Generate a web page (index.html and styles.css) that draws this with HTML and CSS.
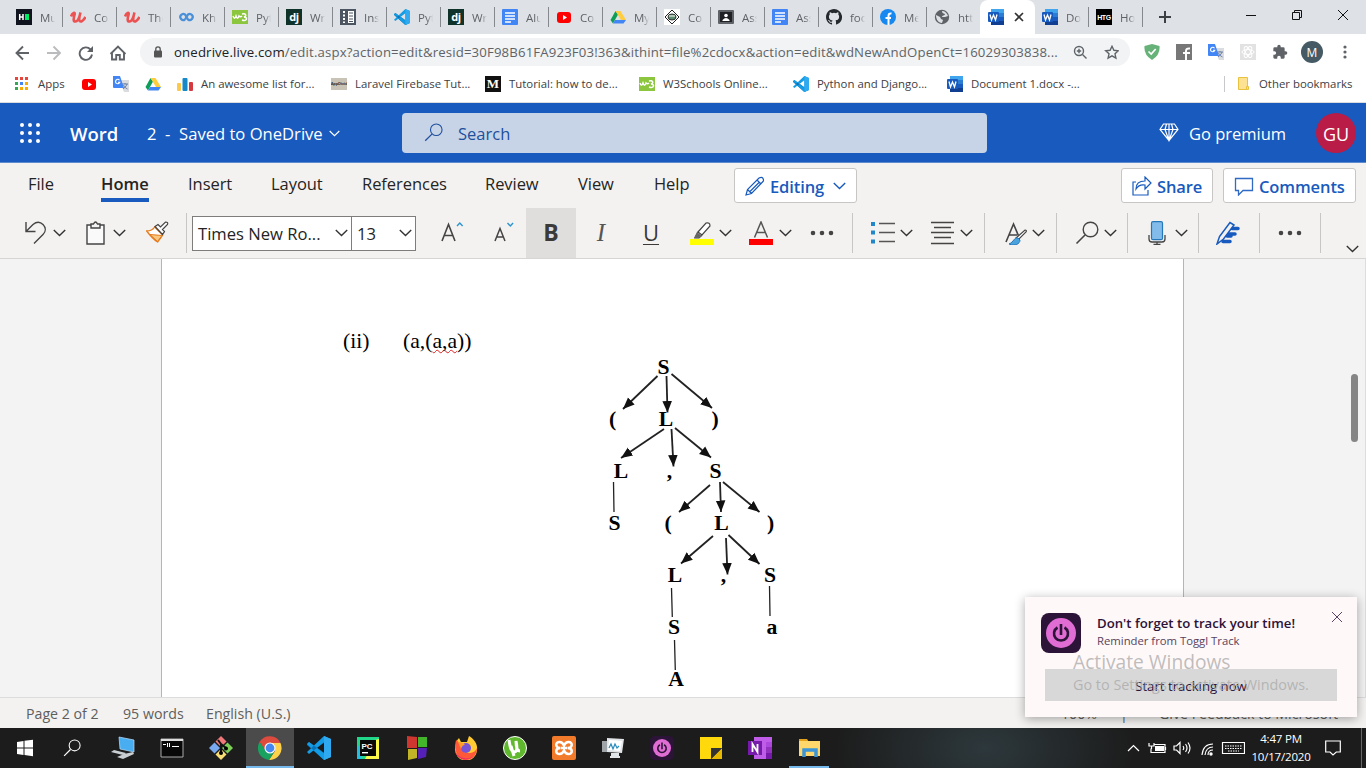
FILE: index.html
```html
<!DOCTYPE html>
<html lang="en">
<head>
<meta charset="utf-8">
<title>2 - Saved to OneDrive</title>
<link rel="stylesheet" href="styles.css">
</head>
<body>
<svg class="sprite" aria-hidden="true">
  <symbol id="chev" viewBox="0 0 13 8"><path d="M.8 1l5.7 5.6L12.200 1" fill="none" stroke="currentColor" stroke-width="1.4"/></symbol>
  <symbol id="udemy" viewBox="0 0 16 16"><path d="M1 7.500c1.500-4 4.500-5 3.500-1.500S3 12.500 5.500 12.500 9.500 8 10.500 3.500c-1.500 5-2 9 0 9s3.500-2 5-4.500" fill="none" stroke="#ec5252" stroke-width="2.600"/></symbol>
  <symbol id="w3" viewBox="0 0 16 16"><path fill="#8bc63e" d="M0 1h16v14H0z"/><path d="M1 7c1 3 2 3 3 0 1 3 2 3 3 0 1 1 2 1 3 0M10 5c4-1 5 2 2 3 4 0 3 5-2 3" fill="none" stroke="#fff" stroke-width="1.500"/></symbol>
  <symbol id="vs" viewBox="0 0 24 24"><path fill="#0873b8" d="M0 8l2-2L23 21l-6 3L0 9z"/><path fill="#149ce5" d="M0 16l2 2L17 6.500v11L10 12 2 6 0 8l17 16 7-3V3l-7-3z" fill-rule="evenodd"/><path fill="#2faaf0" d="M17 0l7 3v18l-7 3z"/></symbol>
  <symbol id="docs" viewBox="0 0 16 16"><rect width="16" height="16" rx="1" fill="#4285f4"/><path d="M3 4h10M3 7h10M3 10h10M3 13h6" stroke="#fff" stroke-width="1.500"/></symbol>
  <symbol id="yt" viewBox="0 0 16 16"><rect x="1" y="3" width="14" height="11" rx="3" fill="#f00"/><path fill="#fff" d="M7 6l4 2.500L7 11z"/></symbol>
  <symbol id="drive" viewBox="0 0 16 16"><path fill="#0f9d58" d="M5.500 2L.5 11 3 14.500 8 5.500z"/><path fill="#ffcd40" d="M5.500 2h5L16 11h-5z"/><path fill="#4285f4" d="M5 11h11l-2.500 3.500H3z"/></symbol>
  <symbol id="word" viewBox="0 0 16 16"><path fill="#41a5ee" d="M3 0h13v4H3z"/><path fill="#2b7cd3" d="M3 4h13v4H3z"/><path fill="#185abd" d="M3 8h13v4H3z"/><path fill="#103f91" d="M3 12h13v4H3z"/><rect y="3" width="11" height="10" rx="1" fill="#185abd"/><path d="M2 5.500l1.500 5.500 2-5 2 5L9 5.500" fill="none" stroke="#fff" stroke-width="1.300"/></symbol>
  <symbol id="trans" viewBox="0 0 16 16"><path fill="#dadce0" d="M6 4h10v12h-5z"/><path d="M9 8h6M12 7v1M14 8c-1 3-3 4-4 5M10.500 9c1 2 2 3 4 4" stroke="#6b7fa5" fill="none"/><path fill="#4285f4" d="M0 0h7l4 12H1q-1 0-1-1z"/><path d="M6.500 4.200a2.200 2.200 0 1 0 .3 2H5" stroke="#fff" fill="none" stroke-width="1.100"/></symbol>
  <symbol id="toggl" viewBox="0 0 40 40"><rect width="40" height="40" rx="8" fill="#2c1338"/><circle cx="20" cy="20" r="15" fill="#e06dd4"/><path d="M16.500 14.500a7 7 0 1 0 7 0M20 11v11" fill="none" stroke="#2c1338" stroke-width="2.600"/></symbol>
  <symbol id="magnify" viewBox="0 0 24 24"><circle cx="15.500" cy="8.500" r="7.300" fill="none" stroke="currentColor" stroke-width="1.400"/><path d="M10 14L1.500 22.500" stroke="currentColor" stroke-width="1.600"/></symbol>
  <symbol id="dots" viewBox="0 0 24 6"><path fill="currentColor" d="M.7 3a2.300 2.300 0 1 0 4.600 0 2.300 2.300 0 1 0-4.600 0M9.700 3a2.300 2.300 0 1 0 4.600 0 2.300 2.300 0 1 0-4.600 0M18.700 3a2.300 2.300 0 1 0 4.600 0 2.300 2.300 0 1 0-4.600 0"/></symbol>
</svg>

<div class="tabs">
  <div class="tab"><svg class="i16" viewBox="0 0 16 16"><path fill="#10141f" d="M0 0h16v16H0z"/><path stroke="#fff" stroke-width="1.500" d="M3.700 5v6M7 5v6M3 8h4"/><path fill="#00ea64" d="M9 5h4v6H9z"/></svg><span>Mu</span></div>
  <div class="tab"><svg class="i16"><use href="#udemy"/></svg><span>Co</span></div>
  <div class="tab"><svg class="i16"><use href="#udemy"/></svg><span>The</span></div>
  <div class="tab"><svg class="i16" viewBox="0 0 16 16"><path d="M7 10.500a3 3 0 1 1 0-5l3 5a3 3 0 1 0 0-5L7 10.500" fill="none" stroke="#4a90d9" stroke-width="2.300"/></svg><span>Kh</span></div>
  <div class="tab"><svg class="i16"><use href="#w3"/></svg><span>Pyt</span></div>
  <div class="tab"><b class="fav dj">dj</b><span>Wri</span></div>
  <div class="tab"><svg class="i16" viewBox="0 0 16 16"><path fill="#4c5562" d="M0 0h16v16H0z"/><path fill="#fff" d="M8 2h6v12H8z"/><path stroke="#fff" stroke-width="2" stroke-dasharray="2 1.500" d="M4 2v12"/><path stroke="#4c5562" d="M9 4h4M9 7h4M9 10h4M9 12.500h4"/></svg><span>Inst</span></div>
  <div class="tab"><svg class="i16"><use href="#vs"/></svg><span>Pyt</span></div>
  <div class="tab"><b class="fav dj">dj</b><span>Wri</span></div>
  <div class="tab"><svg class="i16"><use href="#docs"/></svg><span>Alu</span></div>
  <div class="tab"><svg class="i16"><use href="#yt"/></svg><span>Co</span></div>
  <div class="tab"><svg class="i16"><use href="#drive"/></svg><span>My</span></div>
  <div class="tab"><svg class="i16" viewBox="0 0 16 16"><path fill="#fff" d="M0 0h16v16H0z"/><path fill="none" stroke="#222" d="M8 1l7 7-7 7-7-7z"/><ellipse cx="8" cy="8" rx="4" ry="3" fill="#5c8d6d" stroke="#333"/><path stroke="#fff" d="M5 7h6"/></svg><span>Co</span></div>
  <div class="tab"><svg class="i16" viewBox="0 0 16 16"><rect y="1" width="16" height="14" rx="1" fill="#5f6368"/><path fill="#202124" d="M2 3h12v10H2z"/><circle cx="8" cy="6.500" r="1.800" fill="#fff"/><path fill="#fff" d="M4.500 11q3.500-4 7 0v1h-7z"/></svg><span>Ass</span></div>
  <div class="tab"><svg class="i16"><use href="#docs"/></svg><span>Ass</span></div>
  <div class="tab"><svg class="i16" viewBox="0 0 16 16"><path fill="#24292e" d="M8 0C3.580 0 0 3.580 0 8c0 3.540 2.290 6.530 5.470 7.590.4.070.55-.17.55-.38v-1.490c-2.010.37-2.530-.49-2.690-.94-.09-.23-.48-.94-.82-1.130-.28-.15-.68-.52-.01-.53.63-.01 1.080.58 1.230.82.72 1.210 1.870.87 2.330.66.070-.52.280-.87.510-1.070-1.780-.2-3.640-.89-3.640-3.950 0-.87.310-1.590.820-2.150-.08-.2-.36-1.020.080-2.120 0 0 .67-.21 2.200.82a7.600 7.600 0 0 1 4 0c1.530-1.040 2.200-.82 2.200-.82.440 1.100.160 1.920.080 2.120.510.560.820 1.270.820 2.150 0 3.070-1.870 3.750-3.650 3.950.290.250.540.730.540 1.480v2.200c0 .210.150.460.550.380A8 8 0 0 0 8 0z"/></svg><span>foo</span></div>
  <div class="tab"><svg class="i16" viewBox="0 0 16 16"><circle cx="8" cy="8" r="8" fill="#1688f0"/><path d="M8.500 16V7q0-3 3-2.500M5.500 9h5.500" fill="none" stroke="#fff" stroke-width="2"/></svg><span>Me</span></div>
  <div class="tab nosep"><svg class="i16" viewBox="0 0 16 16"><circle cx="8" cy="8" r="7.200" fill="#5f6368"/><path fill="#dee1e6" d="M2 6l4 2 1 2 2 1-1 3c-4 0-6-4-6-8zM8 2c0 2 1 2 3 3 0 2-3 1-3 3 2 0 4 0 6-1-1-3-3-5-6-5z"/></svg><span>http</span></div>
  <div class="tab active"><svg class="i16"><use href="#word"/></svg><svg class="close" viewBox="0 0 10 10"><path d="M1 1l8 8M9 1L1 9" stroke="#333" stroke-width="1.700"/></svg></div>
  <div class="tab"><svg class="i16"><use href="#word"/></svg><span>Do</span></div>
  <div class="tab"><b class="fav htg">HTG</b><span>Ho</span></div>
  <svg class="newtab" viewBox="0 0 12 12"><path d="M6 0v12M0 6h12" stroke="#3c4043" stroke-width="2"/></svg>
  <svg class="wincontrols" viewBox="0 0 104 12"><g fill="none" stroke="#111"><path d="M0 6.500h10M46.500 3.500h7v7h-7zM48.500 3V1.500h7v7H54M92 1l10 10M102 1L92 11"/></g></svg>
</div>

<div class="addressbar">
  <svg class="nav" viewBox="0 0 112 16"><g fill="none" stroke="#5f6368" stroke-width="1.900"><path d="M15 8H3M9 1.500L2.500 8 9 14.500"/><path stroke="#babcbe" d="M33 8h13M39.500 1.500L46 8l-6.500 6.500"/><path d="M76.500 4.500A6.200 6.200 0 1 0 78 9.500"/><path d="M98 8v6.500h4.200v-4.500h3.600v4.500h4.200V8M96.500 9L104 1.500l7.500 7.500"/></g><path fill="#5f6368" d="M79 1v6h-6z"/></svg>
  <div class="omnibox">
    <svg class="lock" viewBox="0 0 8 12"><path d="M1.800 5V3a2.200 2.200 0 0 1 4.400 0v2" fill="none" stroke="#555" stroke-width="1.300"/><rect y="4.500" width="8" height="7" rx="1" fill="#555"/></svg>
    <span class="url"><b>onedrive.live.com</b>/edit.aspx?action=edit&amp;resid=30F98B61FA923F03!363&amp;ithint=file%2cdocx&amp;action=edit&amp;wdNewAndOpenCt=16029303838...</span>
    <svg class="omni" viewBox="0 0 46 15"><g fill="none" stroke="#5f6368" stroke-width="1.400"><circle cx="6" cy="6" r="4.500"/><path d="M9.500 9.500L13.500 13.500M6 3.800v4.400M3.800 6h4.400M39 1.300l1.900 4 4.400.5-3.300 3 .9 4.300-3.900-2.200-3.900 2.200.9-4.300-3.300-3 4.400-.5z"/></g></svg>
  </div>
  <div class="exts">
    <svg class="i16" viewBox="0 0 16 16"><path fill="#67b279" d="M8 0l7.500 2q1 9-7.500 14Q-.5 11 .5 2z"/><path d="M4.500 7.500L7.200 10l4.500-5" fill="none" stroke="#fff" stroke-width="1.700"/></svg>
    <svg class="i16" viewBox="0 0 16 16"><path fill="#777" d="M0 0h16v16H0z"/><path d="M10 16V7q0-3 4-2.500M7 9h7" stroke="#fff" stroke-width="2" fill="none"/></svg>
    <svg class="i16"><use href="#trans"/></svg>
    <svg class="i16" viewBox="0 0 16 16"><path fill="#e2e2e2" d="M0 0h16v16H0z"/><g fill="none" stroke="#fff"><ellipse cx="8" cy="8" rx="6" ry="2.500"/><ellipse cx="8" cy="8" rx="6" ry="2.500" transform="rotate(60 8 8)"/><ellipse cx="8" cy="8" rx="6" ry="2.500" transform="rotate(120 8 8)"/></g></svg>
    <svg class="i16" viewBox="0 0 24 24"><path fill="#5f6368" d="M20.500 11H19V7a2 2 0 0 0-2-2h-4V3.500a2.500 2.500 0 0 0-5 0V5H4a2 2 0 0 0-2 2v3.800h1.500a2.700 2.700 0 0 1 0 5.400H2V20a2 2 0 0 0 2 2h3.800v-1.500a2.700 2.700 0 0 1 5.400 0V22H17a2 2 0 0 0 2-2v-4h1.500a2.500 2.500 0 0 0 0-5z"/></svg>
    <span class="profile">M</span>
    <svg class="kebab" viewBox="0 0 4 14"><circle cx="2" cy="2" r="1.600"/><circle cx="2" cy="7" r="1.600"/><circle cx="2" cy="12" r="1.600"/></svg>
  </div>
</div>

<div class="bookmarks">
  <div class="bm apps"><svg class="i16" viewBox="0 0 16 16"><path fill="#e8453c" d="M2 1h3v3H2zM7 1h3v3H7zM12 1h3v3h-3z"/><path fill="#34a853" d="M2 6h3v3H2zM2 11h3v3H2z"/><path fill="#4285f4" d="M7 6h3v3H7z"/><path fill="#f9ab00" d="M12 6h3v3h-3zM7 11h3v3H7zM12 11h3v3h-3z"/></svg>Apps</div>
  <div class="bm only"><svg class="i16"><use href="#yt"/></svg></div>
  <div class="bm only"><svg class="i16"><use href="#trans"/></svg></div>
  <div class="bm only"><svg class="i16"><use href="#drive"/></svg></div>
  <div class="bm"><svg class="i16" viewBox="0 0 16 16"><rect y="7" width="4" height="8" rx="1" fill="#fbc94b"/><rect x="5.500" y="2" width="5" height="13" rx="1" fill="#1689c9"/><rect x="12" y="6" width="4" height="9" rx="1" fill="#d5383f"/></svg>An awesome list for...</div>
  <div class="bm"><b class="fav appdiv">AppDivid</b>Laravel Firebase Tut...</div>
  <div class="bm"><b class="fav medium">M</b>Tutorial: how to de...</div>
  <div class="bm"><svg class="i16"><use href="#w3"/></svg>W3Schools Online...</div>
  <div class="bm"><svg class="i16"><use href="#vs"/></svg>Python and Django...</div>
  <div class="bm"><svg class="i16"><use href="#word"/></svg>Document 1.docx -...</div>
  <div class="bm other"><svg class="i16" viewBox="0 0 16 16"><path fill="#fde293" stroke="#e9c13c" d="M1.500 1.500h9v9l-1 3h-8z"/><path fill="#fde293" stroke="#e9c13c" d="M9.500 13.500v-3h2v3z"/></svg>Other bookmarks</div>
</div>

<header class="header">
  <svg class="waffle" viewBox="0 0 20 20" fill="#fff"><g id="wr"><circle cx="2" cy="2" r="2"/><circle cx="10" cy="2" r="2"/><circle cx="18" cy="2" r="2"/></g><use href="#wr" y="8"/><use href="#wr" y="16"/></svg>
  <b class="appname">Word</b>
  <span class="docname">2&nbsp; -&nbsp; Saved to OneDrive</span><svg class="hchev"><use href="#chev"/></svg>
  <div class="search"><svg class="sicon"><use href="#magnify"/></svg><span>Search</span></div>
  <svg class="gem" viewBox="0 0 20 19"><path d="M4.500 1h11L19 6.500 10 17.500 1 6.500zM1 6.500h18M7.500 1L6 6.500l4 11 4-11L12.500 1M10 1v16" fill="none" stroke="#fff" stroke-width="1.200"/></svg>
  <span class="premium">Go premium</span>
  <span class="avatar">GU</span>
</header>

<div class="ribbon">
  <nav class="menu">
    <span>File</span><span class="on">Home</span><span>Insert</span><span>Layout</span><span>References</span><span>Review</span><span>View</span><span>Help</span>
    <div class="btn editing"><svg class="bi" viewBox="0 0 20 20"><path d="M1 19l1.500-5.500L14 2q3-1.500 4 .5t0 3L6.500 17.500zM2.500 13.500l4 4M12 4l4 4M5 15.500L14.500 6" fill="none" stroke="#185abd" stroke-width="1.200"/></svg><span>Editing</span><svg class="ch"><use href="#chev"/></svg></div>
    <div class="btn share"><svg class="bi" viewBox="0 0 20 20"><path d="M4 6H1v13h15v-5M4 13q0-8 9-8V1l6 6-6 6V9q-6-1-9 4z" fill="none" stroke="#185abd" stroke-width="1.200"/></svg><span>Share</span></div>
    <div class="btn comments"><svg class="bi" viewBox="0 0 20 20"><path d="M1.500 2.500h17v12H9L4.500 19v-4.500h-3z" fill="none" stroke="#2f6ac4" stroke-width="1.300"/></svg><span>Comments</span></div>
  </nav>
  <div class="tools">
    <svg class="t24" viewBox="0 0 24 24"><path d="M1 1v9.500h9.500M1 10.500L8 3.500c3-2.500 7-3 10 0s3 7 0 10l-9 9" fill="none" stroke="#444" stroke-width="1.400"/></svg>
    <svg class="ch"><use href="#chev"/></svg>
    <svg class="t24" viewBox="0 0 24 24"><path d="M1 4h17v19H1z" fill="#fafafa" stroke="#444" stroke-width="1.400"/><path d="M5 7V3h2.500q2-4 4 0H14v4z" fill="#f3f2f1" stroke="#444" stroke-width="1.400"/></svg>
    <svg class="ch"><use href="#chev"/></svg>
    <svg class="t24" viewBox="0 0 24 24"><path d="M.7 10c4 0 6-1 8-4l8 8c-2 3-3 4-5 7q-5-3-11-11z" fill="#fff" stroke="#e57a1c" stroke-width="1.300"/><path d="M4 13.500l12 1-4.500 6z" fill="#f8c880" stroke="#e57a1c"/><path d="M9 5.500l3-2 2.500 2.500 5-5q3 0 2 2.500l-5 5 2 2-2 3z" fill="#fafafa" stroke="#444" stroke-width="1.200"/></svg>
    <i class="sep"></i>
    <div class="combo family"><span>Times New Ro...</span><svg class="ch"><use href="#chev"/></svg></div>
    <div class="combo size"><span>13</span><svg class="ch"><use href="#chev"/></svg></div>
    <svg class="t24" viewBox="0 0 24 24"><path d="M1 20L7.500 3.500 14 20M3.500 14.500h8" fill="none" stroke="#444" stroke-width="1.600"/><path d="M16 5l2.800-3 2.800 3" fill="none" stroke="#2d94d0" stroke-width="1.400"/></svg>
    <svg class="t24" viewBox="0 0 24 24"><path d="M1 20L6 7.500 11 20M3 16h6" fill="none" stroke="#444" stroke-width="1.500"/><path d="M13.500 2l2.800 3 2.800-3" fill="none" stroke="#2d94d0" stroke-width="1.400"/></svg>
    <b class="fmt bold">B</b><i class="fmt italic">I</i><u class="fmt under">U</u>
    <svg class="t24" viewBox="0 0 24 24"><path fill="#ff0" d="M0 18h24v6H0z"/><path d="M8 11l8-9q4-1 4 3l-8 9zM8 11l4 3-3 3H5z" fill="#fff" stroke="#444" stroke-width="1.200"/><path fill="#666" d="M7 11l5 4-3 2H4z"/></svg>
    <svg class="ch"><use href="#chev"/></svg>
    <svg class="t24" viewBox="0 0 24 24"><path fill="red" d="M0 18h25v6H0z"/><path d="M5.500 16.500L12 1 18.500 16.500M8 11.500h8" fill="none" stroke="#555" stroke-width="1.500"/></svg>
    <svg class="ch"><use href="#chev"/></svg>
    <svg class="more"><use href="#dots"/></svg>
    <i class="sep"></i>
    <svg class="t24" viewBox="0 0 24 24"><path d="M8 2.500h16M8 11.500h16M8 20.500h16" stroke="#555" stroke-width="1.300"/><path fill="#2386c8" d="M0 1h4v4H0zM0 9.500h4v4H0zM0 18.500h4v4H0z"/></svg>
    <svg class="ch"><use href="#chev"/></svg>
    <svg class="t24" viewBox="0 0 24 24"><path d="M0 1.500h23M3 6.500h17M0 11.500h23M3 16.500h17M0 22.500h23" stroke="#444" stroke-width="1.300"/></svg>
    <svg class="ch"><use href="#chev"/></svg>
    <i class="sep"></i>
    <svg class="t24" viewBox="0 0 24 24"><path d="M1 21L8.500 3 14 16M4 14h8" fill="none" stroke="#444" stroke-width="1.600"/><path d="M11 17l9-8q2 0 1 2l-8 8z" fill="#fff" stroke="#444" stroke-width="1.200"/><path d="M13 17c-4-1-4 4-9 6 6 2.500 11 0 11-4z" fill="#4aa3df" stroke="#2878b8"/></svg>
    <svg class="ch"><use href="#chev"/></svg>
    <i class="sep"></i>
    <svg class="t24 find"><use href="#magnify"/></svg>
    <svg class="ch"><use href="#chev"/></svg>
    <i class="sep"></i>
    <svg class="t24" viewBox="0 0 24 24"><rect x="3.500" y=".7" width="11" height="18" rx="1.500" fill="#83bcea" stroke="#2477b8" stroke-width="1.200"/><path d="M1 14v4q0 3 3 3h10q3 0 3-3v-4M9 21v2.500M5.500 23.400h7" fill="none" stroke="#444" stroke-width="1.300"/></svg>
    <svg class="ch"><use href="#chev"/></svg>
    <i class="sep"></i>
    <svg class="t24" viewBox="0 0 24 24"><path d="M16 7.500h6M13 13h6M11 15h4M7 20.500h7" stroke="#185abd" stroke-width="3.500" stroke-linecap="round"/><path d="M1 23l2.500-7.500L14 1.500l4 2.500L7.500 18z" fill="#f3f2f1" stroke="#185abd" stroke-width="1.500"/></svg>
    <i class="sep"></i>
    <svg class="more"><use href="#dots"/></svg>
    <i class="sep"></i>
    <svg class="ch collapse"><use href="#chev"/></svg>
  </div>
</div>

<main class="canvas">
  <article class="page">
    <p class="item"><span class="num">(ii)</span><span>(a,(<span class="typo">a,a</span>))</span></p>
    <svg class="tree" viewBox="600 350 200 347">
      <defs><marker id="head" viewBox="0 0 12 10" refX="12" refY="5" markerWidth="11.500" markerHeight="10.500" markerUnits="userSpaceOnUse" orient="auto"><path d="M0 0l12 5-12 5z" fill="#111"/></marker></defs>
      <g stroke="#222" stroke-width="1.800" marker-end="url(#head)">
        <path d="M657.500 376L623 409"/><path d="M666.500 376L667.500 412.500"/><path d="M671.500 374L712 408"/>
        <path d="M664 429L621 458"/><path d="M671.500 429L673.500 466.500"/><path d="M675 428L711 457.500"/>
        <path d="M710 485L679 512"/><path d="M720 482L721 512"/><path d="M723 482L759.500 512"/>
        <path d="M713 536L681 563.500"/><path d="M726 538L727.500 574.500"/><path d="M728.500 535L759.500 564"/>
      </g>
      <path d="M613.500 482l.5 30M671.500 588l.8 29M769.500 586l.5 30M674.500 640l.8 30" stroke="#222" stroke-width="1.300"/>
      <g class="nodes">
        <text x="663.500" y="374">S</text>
        <text x="612.500" y="426">(</text><text x="666" y="426">L</text><text x="715" y="426">)</text>
        <text x="621" y="478">L</text><text x="669.500" y="478">,</text><text x="715.500" y="478">S</text>
        <text x="614.500" y="530">S</text><text x="668" y="530">(</text><text x="721.500" y="530">L</text><text x="770.500" y="530">)</text>
        <text x="675" y="582">L</text><text x="723.500" y="582">,</text><text x="770" y="582">S</text>
        <text x="674" y="634">S</text><text x="772" y="634">a</text>
        <text x="676" y="686">A</text>
      </g>
    </svg>
  </article>
  <div class="scroll"><i class="thumb"></i></div>
</main>

<footer class="status">
  <span>Page 2 of 2</span><span>95 words</span><span>English (U.S.)</span><span class="zoom">100%</span><span>|</span><span class="feedback">Give Feedback to Microsoft</span>
</footer>

<div class="taskbar">
  <div class="task"><svg viewBox="0 0 24 24"><path fill="#fff" d="M4 6l6.500-1v6.500H4zM11.500 4.800L20 3.700v7.800h-8.500zM4 12.500h6.500V19L4 18zM11.500 12.500H20v7.800l-8.500-1.200z"/></svg></div>
  <div class="task"><svg class="tsearch"><use href="#magnify"/></svg></div>
  <div class="task"><svg viewBox="0 0 24 24"><path fill="#48adf1" stroke="#b9e0ff" stroke-width=".7" d="M8 1l15 3v12L9 13z"/><path fill="#c9ced2" d="M3 14l12 3-3 2-12-3zM13 18l9-2 1 2-11 5-6-2z"/></svg></div>
  <div class="task"><svg viewBox="0 0 24 24"><path fill="#080808" stroke="#aaa" d="M1 3h22v18H1z"/><path fill="#ddd" d="M1 3h22v2H1z"/><path d="M3 8.500h3M7.500 7v4M9.500 7v4M12 10.500h7" stroke="#fff"/></svg></div>
  <div class="task"><svg viewBox="0 0 24 24"><path fill="#f07878" d="M12 0l5.500 5.500L12 11 6.500 5.500z"/><path fill="#78a9f0" d="M5.500 6.500L11 12l-5.500 5.500L0 12z"/><path fill="#7dcf57" d="M18.500 6.500L24 12l-5.500 5.500L13 12z"/><path fill="#f8de74" d="M12 13l5.500 5.500L12 24l-5.500-5.500z"/><path d="M9 4l3 4v9M12 8l5 4" fill="none" stroke="#111" stroke-width="2"/><circle cx="12" cy="17" r="2"/><circle cx="17" cy="12.500" r="2"/></svg></div>
  <div class="task current"><svg viewBox="0 0 24 24"><path fill="#dd4b3e" d="M1.500 6A12 12 0 0 1 22.500 7H12L7 14z"/><path fill="#fdd24a" d="M22.500 7A12 12 0 0 1 11 24l6-9V9l-5-2z"/><path fill="#18a15f" d="M1.500 6A12 12 0 0 0 11 24l5-8-8-1z"/><circle cx="12" cy="12" r="5.500" fill="#fff"/><circle cx="12" cy="12" r="4.400" fill="#4688f1"/></svg></div>
  <div class="task"><svg><use href="#vs"/></svg></div>
  <div class="task"><svg viewBox="0 0 24 24"><path fill="#21d789" d="M1 1h22v22H1z"/><path fill="#fcf84a" d="M19 4l4-1v20H9z"/><path fill="#22bfe0" d="M1 13l4-8v18H1z"/><path fill="#080808" d="M4 4h16v16H4z"/><text x="5.500" y="12.500" class="pc">PC</text><path fill="#fff" d="M6 16h6v1.400H6z"/></svg></div>
  <div class="task"><svg viewBox="0 0 24 24"><path fill="#cf3630" d="M2 0l10 1v11H2z"/><path fill="#43b52b" d="M13 1h9v10h-9z"/><path fill="#c1b527" d="M3 13h9v9l-9 2z"/><path fill="#5420b8" d="M13 12h9l-1 9-8 2z"/></svg></div>
  <div class="task"><svg viewBox="0 0 24 24"><path fill="#ffca32" d="M15 0c5 3 9 8 8 14A11 11 0 0 1 1 13C1 8 3 4 5 2l2 4h6z"/><path fill="#ff5839" d="M2 4l5 4c-1 5 2 9 7 9s8-2 9-5c0 6-4 12-11 12S-1 16 2 4z"/><path fill="#ec296c" d="M1 14c2 8 12 11 19 6-5 5-17 6-19-6z"/><circle cx="12" cy="12" r="5" fill="#7653d7"/><path fill="#ff9a2d" d="M4 6q5 0 7 3-3 0-4 4z"/></svg></div>
  <div class="task"><svg viewBox="0 0 24 24"><circle cx="12" cy="12" r="11.500" fill="#5fb82e" stroke="#fff"/><path d="M6 4c1 5 1 11 5 12 4 0 3-6 2-11 0 6 1 10 4 10M8 10l3 10" fill="none" stroke="#fff" stroke-width="3"/></svg></div>
  <div class="task"><svg viewBox="0 0 24 24"><rect width="24" height="24" rx="2" fill="#f17a2b"/><path d="M8.500 12C3 12 3 6 7.500 6q3 0 4.500 3.500Q13.500 6 16.500 6C21 6 21 12 15.500 12 21 12 21 18 16.500 18q-3 0-4.500-3.500Q10.500 18 7.500 18C3 18 3 12 8.500 12zM9 12h6" fill="none" stroke="#fff" stroke-width="2.500"/></svg></div>
  <div class="task"><svg viewBox="0 0 24 24"><path fill="#9fa5a8" d="M1 5h8v11H1z"/><path fill="#e2e6e8" d="M6 2l17 1-2 14-15-1zM10 17h8v3h1v2H9v-2h1z"/><path fill="#fff" d="M8 4l13 1-2 10-12-1z"/><path d="M8 12l2-4 2 5 2-5 2 4 2-2" fill="none" stroke="#288bbb" stroke-width="1.200"/></svg></div>
  <div class="task"><svg><use href="#toggl"/></svg></div>
  <div class="task"><svg viewBox="0 0 24 24"><path fill="#ffd90b" d="M1 1h22v11H12v11H1z"/><path fill="#e9b900" d="M12 23h11V12z"/><path fill="#333" d="M12 12h11L12 23z"/></svg></div>
  <div class="task"><svg viewBox="0 0 24 24"><path fill="#c05de8" d="M6 1h18v22H6z"/><path fill="#ae47de" d="M18 6h6v5h-6z"/><path fill="#9332bf" d="M18 11h6v6h-6z"/><path fill="#7719aa" d="M18 17h6v6h-6zM0 5h14v14H0z"/><path d="M4.500 16V8l5 8V8" fill="none" stroke="#fff" stroke-width="1.800"/></svg></div>
  <div class="task open"><svg viewBox="0 0 24 24"><path fill="#e4a11b" d="M2 3h8l2 3H2z"/><path fill="#ffd76b" d="M2 5h21v15H2z"/><path d="M7 21v-7h12v7" fill="none" stroke="#3b95d7" stroke-width="3.500"/></svg></div>
  <div class="tray">
    <svg class="trayicons" viewBox="0 0 118 16"><g fill="none" stroke="#fff" stroke-width="1.200"><path d="M1 11l5.500-5.500L12 11M27 4.500h11v8H24v-4M38.500 7v3M22 3v3h5V3M24.500 6v3M47 6h2.500L53 2.500v11L49.500 10H47zM56 6q1.500 2 0 4M58.500 4q3 4 0 8M61 2.500q4 5.500 0 11M75 15q1-11 11-11M78 15q1-8 8-8M81 15q0-5 5-5M95.500 2.500h22v11h-22z"/><path d="M98 6h17M98 8.500h17M101 11h11" stroke-dasharray="1.500 1"/></g><path fill="#fff" d="M28 6h9v5h-9z"/><circle cx="84" cy="14" r="1.700" fill="#fff"/></svg>
    <div class="clock"><span>4:47 PM</span><span>10/17/2020</span></div>
    <svg class="notif" viewBox="0 0 16 16"><path d="M.7 1h14.600v11h-4L8 15l-3-3H.7z" fill="none" stroke="#fff" stroke-width="1.200"/></svg>
    <i class="peek"></i>
  </div>
</div>

<div class="toast">
  <svg class="logo"><use href="#toggl"/></svg>
  <div class="copy"><b>Don't forget to track your time!</b><span>Reminder from Toggl Track</span></div>
  <svg class="x" viewBox="0 0 10 10"><path d="M0 0l10 10M10 0L0 10" stroke="#5a4566" stroke-width="1"/></svg>
  <div class="action">Start tracking now</div>
</div>
<div class="watermark"><span class="wm1">Activate Windows</span><span class="wm2">Go to Settings to activate Windows.</span></div>
</body>
</html>
```
FILE: styles.css
```css
* { box-sizing: border-box; }
body { margin: 0; width: 1366px; height: 768px; overflow: hidden; font-family: "Open Sans", "Noto Sans", sans-serif; background: #fff; white-space: nowrap; }
svg { display: block; flex: none; }
.sprite { position: absolute; width: 0; height: 0; }
.i16 { width: 16px; height: 16px; }

/* browser tabs */
.tabs { display: flex; align-items: center; height: 34px; padding-left: 9px; background: #dee1e6; }
.tab { width: 54px; height: 34px; padding-left: 7px; display: flex; align-items: center; gap: 8px; color: #5f6368; font-size: 11.5px; background: linear-gradient(#85888c, #85888c) right center / 1px 20px no-repeat; }
.tab span { width: 15px; overflow: hidden; -webkit-mask-image: linear-gradient(90deg, #000 60%, transparent); mask-image: linear-gradient(90deg, #000 60%, transparent); }
.tab.nosep { background: none; width: 53px; }
.tab.active { width: 55px; padding-left: 8px; background: #fff; border-radius: 8px 8px 0 0; gap: 10px; }
.close { width: 10px; height: 10px; }
.fav { width: 16px; height: 16px; flex: none; display: flex; align-items: center; justify-content: center; overflow: hidden; color: #fff; line-height: 1; }
.dj { background: #0f3329; font-size: 11px; letter-spacing: -.3px; padding-bottom: 1px; }
.htg { background: #000; font: bold 7px "Liberation Sans", sans-serif; letter-spacing: -.4px; }
.newtab { width: 12px; height: 12px; margin-left: 16px; }
.wincontrols { width: 104px; height: 12px; margin-left: 75px; margin-bottom: 5px; }

/* address row */
.addressbar { height: 38px; display: flex; align-items: center; padding: 0 0 0 14px; }
.nav { width: 112px; height: 16px; margin-bottom: 1px; }
.omnibox { width: 990px; height: 28px; margin: 0 0 2px 14px; padding-left: 14px; border-radius: 14px; background: #f1f3f4; display: flex; align-items: center; }
.lock { width: 8px; height: 12px; }
.url { width: 899px; margin-left: 12px; color: #5f6368; font-size: 13.2px; letter-spacing: .15px; }
.url b { color: #202124; font-weight: 400; }
.omni { width: 46px; height: 15px; }
.exts { display: flex; align-items: center; gap: 16px; margin: 0 0 2px 14px; }
.profile { width: 22px; height: 22px; margin-left: -3px; border-radius: 50%; background: #455a64; color: #fff; font-size: 12px; display: flex; align-items: center; justify-content: center; }
.kebab { width: 4px; height: 14px; margin-left: 4px; fill: #5f6368; }

.bookmarks { height: 31px; padding: 0 0 7px 13px; display: flex; align-items: center; border-bottom: 1px solid #dadce0; color: #3c4043; font-size: 11.4px; }
.bm { width: 154px; display: flex; align-items: center; gap: 8px; }
.apps { width: 68px; gap: 9px; }
.only { width: 32px; }
.appdiv { height: 12px; background: #c9c3b5; color: #333; font-size: 4px; letter-spacing: -.2px; }
.medium { background: #111; font: bold 13px "Liberation Serif", serif; }
.other { width: 130px; height: 16px; margin-left: 123px; padding-left: 12px; gap: 6px; border-left: 1px solid #c6c8cb; }

/* Word header */
.header { height: 60px; background: #185abd; border-bottom: 1px solid #5e8bd0; display: flex; align-items: center; color: #fff; font-size: 16.500px; padding-left: 20px; }
.waffle { width: 20px; height: 20px; }
.appname { width: 77px; margin: 1px 0 0 30px; font-size: 18.500px; font-weight: 600; }
.docname { width: 177px; margin-top: 1px; font-size: 16.600px; }
.hchev { width: 11px; height: 7px; margin: 1px 0 0 5px; }
.search { width: 585px; height: 40px; margin-left: 62px; padding-left: 22px; border-radius: 4px; background: #c7d4e8; color: #204f9c; display: flex; align-items: center; }
.search span { margin-top: 1px; }
.sicon { width: 19px; height: 19px; margin-right: 15px; }
.gem { width: 20px; height: 19px; margin-left: 172px; }
.premium { width: 97px; margin: 1px 0 0 10px; font-size: 16.500px; }
.avatar { width: 40px; height: 40px; margin-left: 30px; padding-top: 2px; border-radius: 50%; background: #b91c46; font-size: 18px; display: flex; align-items: center; justify-content: center; }

/* ribbon */
.ribbon { height: 96px; background: #f3f2f1; border-bottom: 1px solid #d6d5d4; }
.menu { height: 45px; display: grid; grid-template-columns: 73px 87px 83px 91px 123px 93px 76px 80px 387px 102px 133px; padding-left: 28px; color: #252423; font-size: 16.500px; }
.menu > span { height: 39px; padding-top: 9px; line-height: 23px; justify-self: start; letter-spacing: -.05px; }
.menu .on { font-weight: 600; border-bottom: 4px solid #185abd; letter-spacing: 0; }
.btn { height: 35px; margin-top: 5px; padding: 1px 0 0 10px; border: 1px solid #c8c6c4; border-radius: 3px; background: #fff; color: #185abd; font-weight: 600; font-size: 16.500px; display: flex; align-items: center; gap: 5px; letter-spacing: -.1px; }
.bi { width: 20px; height: 20px; margin-top: -1px; }
.editing { width: 123px; }
.share { width: 92px; }
.comments { width: 133px; }
.ch { width: 13px; height: 8px; color: #333; }
.btn .ch { color: #185abd; margin-left: 4px; }
.tools { height: 50px; padding-left: 25px; display: grid; align-items: center; grid-template-columns: 28px 33px 27px 33px 40px 6px 159px 90px 53px 32px 50px 50px 64px 29px 30px 30px 31px 42px 19px 29px 31px 29px 24px 21px 27px 24px 19px 29px 23px 21px 27px 23px 18px 43px 19px 42px 26px 20px; }
.t24 { width: 24px; height: 24px; color: #444; }
.sep { width: 1px; height: 40px; background: #c8c6c4; }
.combo { height: 35px; border: 1px solid #7f7d7b; background: #fff; display: flex; align-items: center; justify-content: space-between; padding: 0 3px 0 5px; color: #252423; font-size: 16.600px; }
.family { width: 160px; }
.size { width: 65px; }
.fmt { width: 50px; height: 50px; display: flex; align-items: center; justify-content: center; color: #3b3a39; font-size: 23px; padding-bottom: 2px; }
.bold { background: #dfdedd; }
.italic { font-family: "Liberation Serif", serif; font-size: 25px; color: #555; padding-bottom: 0; }
.under { font-size: 22px; text-underline-offset: 3px; text-decoration-thickness: 1px; }
.more { width: 24px; height: 6px; color: #444; }
.collapse { margin-top: 31px; }

/* document */
.canvas { height: 438px; display: flex; background: #f3f3f3; }
.page { width: 1023px; height: 438px; margin-left: 161px; padding: 68px 0 0 181px; border: solid #b5b5b5; border-width: 0 1px; background: #fff; font-family: "Liberation Serif", serif; }
.item { margin: 0; height: 23px; font-size: 21.670px; line-height: 28px; display: flex; }
.num { width: 60px; }
.typo { text-decoration: underline wavy #d22 1px; text-underline-offset: 1px; text-decoration-skip-ink: none; }
.tree { width: 200px; height: 347px; margin-left: 257px; }
.nodes { font: bold 21.670px "Liberation Serif", serif; text-anchor: middle; }
.scroll { width: 17px; margin-left: 165px; border-right: 1px solid #ddd; padding: 115px 0 0 2px; }
.thumb { display: block; width: 7px; height: 68px; border-radius: 4px; background: #858585; }
.status { height: 31px; padding-left: 26px; border-top: 1px solid #dcdcdc; background: #f3f2f1; display: grid; grid-template-columns: 97px 83px 855px 59px 39px 190px; align-items: center; color: #605e5c; font-size: 14.200px; }

/* desktop taskbar */
.taskbar { height: 40px; display: flex; background: radial-gradient(ellipse 150px 90px at 985px 20px, #2d383c, #1c1c1c00), #1c1c1c; }
.task { width: 49px; height: 40px; display: flex; align-items: center; justify-content: center; }
.task svg { width: 24px; height: 24px; }
.task .tsearch { width: 18px; height: 18px; margin-right: 3px; color: #fff; }
.current { width: 48px; margin: 0 0 0 1px; background: #4b4b4b; box-shadow: inset 0 -2px #76b9ed; }
.open { background: linear-gradient(#76b9ed, #76b9ed) center bottom / 40px 2px no-repeat; }
.pc { font: bold 8px "Liberation Sans", sans-serif; fill: #fff; }
.tray { margin-left: auto; display: flex; align-items: center; color: #fff; }
.trayicons { width: 118px; height: 16px; }
.clock { width: 74px; margin-left: -1px; display: flex; flex-direction: column; align-items: center; font-size: 11.500px; line-height: 18px; letter-spacing: -.2px; }
.notif { width: 16px; height: 16px; margin-left: 7px; }
.peek { width: 1px; height: 40px; margin: 0 4px 0 20px; background: #666; }

/* notification floating over the desktop */
.toast { position: absolute; left: 1025px; top: 597px; width: 332px; height: 120px; padding: 16px 15px 0 16px; display: grid; grid-template: 56px 32px / 56px 1fr 10px; background: #fef8f8; box-shadow: 0 2px 10px #0005; color: #2c1338; }
.logo { width: 40px; height: 40px; }
.copy { display: flex; flex-direction: column; font-size: 11.300px; line-height: 17px; color: #564360; padding-top: 1px; }
.copy b { font-size: 13.200px; font-weight: 600; line-height: 18px; color: #2c1338; }
.x { width: 10px; height: 10px; margin: -1px 0 0 0; }
.action { grid-column: 1 / 4; margin: 0 5px 0 4px; background: #d8d8d8; font-size: 13.200px; line-height: 34px; text-align: center; }
.watermark { position: absolute; left: 1073px; top: 650px; display: flex; flex-direction: column; color: #a5a5a5b8; }
.wm1 { font-size: 19.200px; line-height: 24px; }
.wm2 { font-size: 14.400px; line-height: 21px; }
```
